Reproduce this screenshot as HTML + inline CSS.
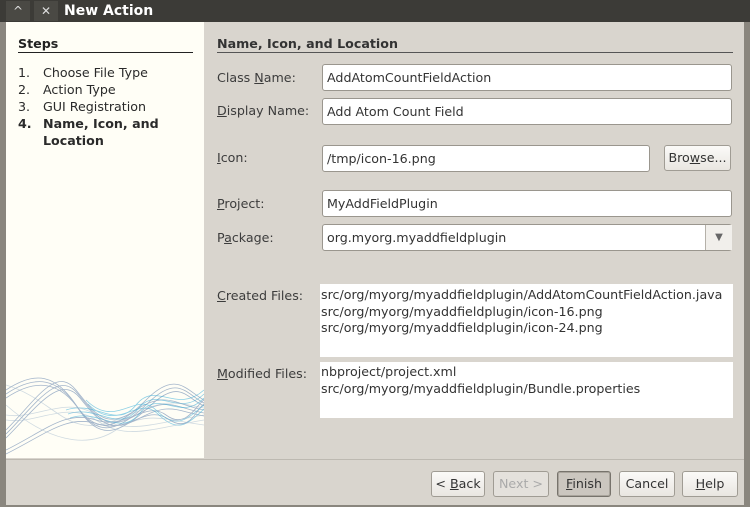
<!DOCTYPE html><html><head><style>
body{margin:0;width:750px;height:507px;background:#d9d5ce;font-family:"DejaVu Sans","Liberation Sans",sans-serif;font-size:12.65px;color:#3c3c3c;position:relative;overflow:hidden}
.a{position:absolute}
.tb{left:0;top:0;width:750px;height:22px;background:#3c3b37}
.inp{position:absolute;background:#fff;border:1px solid #9a968e;border-radius:3px;box-sizing:border-box;padding:5px 4px 4px;height:27px;line-height:15px;color:#333;white-space:nowrap}
.lbl{position:absolute;left:217px;color:#3c3c3c}
.btn{position:absolute;top:471px;height:26px;box-sizing:border-box;border:1px solid #a09c94;border-radius:3px;background:linear-gradient(#fbfaf8,#e9e6e1);text-align:center;line-height:24px;color:#333}
u{text-decoration:underline}
.st{display:flex;white-space:nowrap}.st b,.st span.n{width:25px;flex:none;font-weight:inherit}
</style></head><body>
<div class="a tb"></div>
<div class="a" style="left:6px;top:1px;width:24px;height:20px;background:#4a4944;color:#ddd;text-align:center;line-height:20px;font-size:12px">^</div>
<div class="a" style="left:34px;top:1px;width:24px;height:20px;background:#4a4944;color:#ddd;text-align:center;line-height:20px;font-size:12px">✕</div>
<div class="a" style="left:64px;top:3px;color:#fff;font-weight:bold;font-size:14px">New Action</div>
<div class="a" style="left:0;top:22px;width:6px;height:485px;background:#8a867e"></div>
<div class="a" style="left:744px;top:22px;width:6px;height:485px;background:#8a867e"></div>
<div class="a" style="left:6px;top:22px;width:198px;height:436px;background:#fffef6"></div>
<svg class="a" style="left:6px;top:370px" width="198" height="88" viewBox="0 0 198 88">
<g fill="none" stroke-width="0.8">
<g stroke="#5a7ba8" opacity=".55">
<path d="M0 20 C30 0 50 5 70 35 S110 60 140 30 S180 20 198 30"/>
<path d="M0 24 C30 4 52 8 72 38 S112 62 142 33 S180 24 198 33"/>
<path d="M0 28 C30 8 54 11 74 41 S114 64 144 36 S180 28 198 36"/>
<path d="M0 60 C30 30 50 -5 70 20 S100 60 130 40 S170 35 198 40"/>
<path d="M0 64 C30 34 52 -1 72 24 S102 62 132 44 S170 38 198 43"/>
<path d="M0 68 C30 38 54 3 74 28 S104 64 134 48 S170 41 198 46"/>
<path d="M0 80 C40 60 60 40 90 50 S140 30 160 45 S190 35 198 30"/>
<path d="M0 84 C40 64 62 44 92 54 S140 34 162 49 S190 39 198 34"/>
</g>
<g stroke="#3fb0da" opacity=".6">
<path d="M60 40 C90 30 110 60 130 35 S170 45 198 20"/>
<path d="M62 44 C92 34 112 64 132 39 S172 49 198 24"/>
<path d="M64 48 C94 38 114 68 134 43 S174 53 198 28"/>
<path d="M80 30 C110 60 130 20 150 40 S180 50 198 35"/>
<path d="M82 34 C112 64 132 24 152 44 S182 54 198 39"/>
</g>
<g stroke="#9fb6cc" opacity=".5">
<path d="M0 45 C30 50 60 25 90 45 S140 55 198 45"/>
<path d="M0 50 C30 55 60 30 90 50 S140 60 198 50"/>
<path d="M0 15 C50 30 60 70 110 50 S160 30 198 38"/>
<path d="M0 35 C40 70 80 80 110 60 S160 50 198 55"/>
</g>
</g></svg>
<div class="a" style="left:18px;top:36px;font-weight:bold;color:#222">Steps</div>
<div class="a" style="left:18px;top:52px;width:175px;height:1px;background:#222"></div>
<div class="a" style="left:18px;top:64px;width:180px;line-height:17px;color:#2a2a2a">
<div class="st"><span class="n">1.</span><span>Choose File Type</span></div>
<div class="st"><span class="n">2.</span><span>Action Type</span></div>
<div class="st"><span class="n">3.</span><span>GUI Registration</span></div>
<div class="st" style="font-weight:bold"><span class="n">4.</span><span>Name, Icon, and<br>Location</span></div></div>
<div class="a" style="left:217px;top:36px;font-weight:bold;color:#333">Name, Icon, and Location</div>
<div class="a" style="left:217px;top:52px;width:516px;height:1px;background:#555"></div>
<div class="lbl" style="top:70px">Class <u>N</u>ame:</div>
<div class="inp" style="left:322px;top:64px;width:410px">AddAtomCountFieldAction</div>
<div class="lbl" style="top:103px"><u>D</u>isplay Name:</div>
<div class="inp" style="left:322px;top:98px;width:410px">Add Atom Count Field</div>
<div class="lbl" style="top:150px"><u>I</u>con:</div>
<div class="inp" style="left:322px;top:145px;width:328px">/tmp/icon-16.png</div>
<div class="btn" style="left:664px;top:145px;width:67px">Bro<u>w</u>se...</div>
<div class="lbl" style="top:196px"><u>P</u>roject:</div>
<div class="inp" style="left:322px;top:190px;width:410px">MyAddFieldPlugin</div>
<div class="lbl" style="top:230px">P<u>a</u>ckage:</div>
<div class="inp" style="left:322px;top:224px;width:410px">org.myorg.myaddfieldplugin</div>
<div class="a" style="left:705px;top:225px;width:26px;height:25px;border-left:1px solid #b5b1a9;background:#f1efeb;text-align:center;line-height:25px;color:#666;font-size:10px">▼</div>
<div class="lbl" style="top:288px"><u>C</u>reated Files:</div>
<div class="a" style="left:320px;top:284px;width:413px;height:73px;background:#fff;line-height:16.5px;color:#333;padding:3px 0 0 1px;box-sizing:border-box;white-space:nowrap">src/org/myorg/myaddfieldplugin/AddAtomCountFieldAction.java<br>src/org/myorg/myaddfieldplugin/icon-16.png<br>src/org/myorg/myaddfieldplugin/icon-24.png</div>
<div class="lbl" style="top:366px"><u>M</u>odified Files:</div>
<div class="a" style="left:320px;top:362px;width:413px;height:56px;background:#fff;line-height:16.5px;color:#333;padding:2px 0 0 1px;box-sizing:border-box">nbproject/project.xml<br>src/org/myorg/myaddfieldplugin/Bundle.properties</div>
<div class="a" style="left:6px;top:459px;width:738px;height:1px;background:#bdb9b1"></div>
<div class="btn" style="left:431px;width:54px">&lt; <u>B</u>ack</div>
<div class="btn" style="left:493px;width:56px;color:#aaa;background:#e4e1dc">Next &gt;</div>
<div class="btn" style="left:557px;width:54px;background:#cbc6bf;border-color:#77736c;box-shadow:inset 0 0 0 1px #a9a49c"><u>F</u>inish</div>
<div class="btn" style="left:619px;width:56px">Cancel</div>
<div class="btn" style="left:682px;width:56px"><u>H</u>elp</div>
<div class="a" style="left:0;top:505px;width:750px;height:2px;background:#8a867e"></div>
</body></html>
